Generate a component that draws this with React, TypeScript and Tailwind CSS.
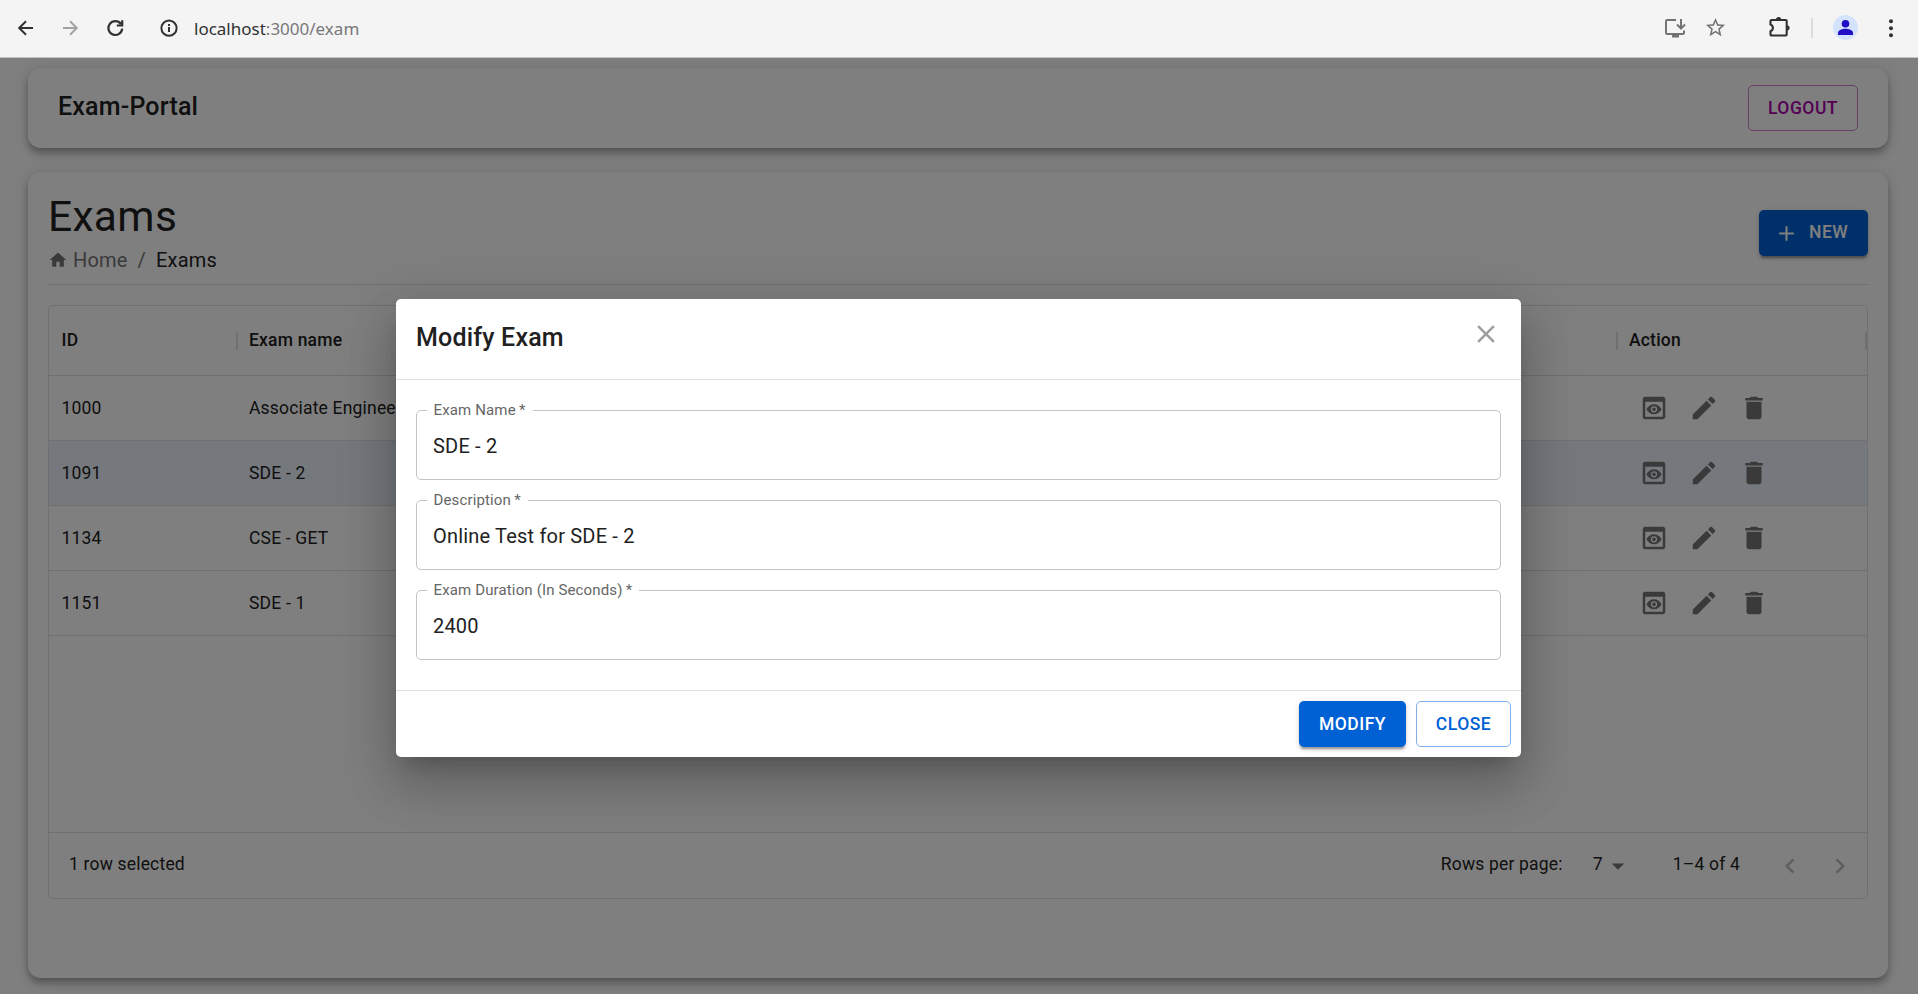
import React from "react";
import { MdAdd, MdArrowDropDown, MdClose, MdDelete, MdEdit, MdHome, MdKeyboardArrowLeft, MdKeyboardArrowRight, MdPreview } from "react-icons/md";

const rows = [
  { id: "1000", name: "Associate Engineer", selected: false },
  { id: "1091", name: "SDE - 2", selected: true },
  { id: "1134", name: "CSE - GET", selected: false },
  { id: "1151", name: "SDE - 1", selected: false },
];

const cardShadow =
  "shadow-[0px_3.75px_6.25px_-1.25px_rgba(0,0,0,0.2),0px_6.25px_10px_0px_rgba(0,0,0,0.14),0px_1.25px_17.5px_0px_rgba(0,0,0,0.12)]";
const buttonShadow =
  "shadow-[0px_3.75px_1.25px_-2.5px_rgba(0,0,0,0.2),0px_2.5px_2.5px_0px_rgba(0,0,0,0.14),0px_1.25px_6.25px_0px_rgba(0,0,0,0.12)]";
const buttonText = "text-[17.5px] leading-[30.6px] font-medium tracking-[0.5px]";

function BrowserBar() {
  return (
    <div className="flex h-[58px] shrink-0 items-center border-b border-[#c4c4c4] bg-[#f4f4f4] text-[#303133]">
      <svg className="ml-[16px] mb-[2px] size-5" viewBox="0 0 20 20" fill="none" stroke="currentColor" strokeWidth="2">
        <path d="M17 10H3.5M10 3.2 3.2 10l6.8 6.8" />
      </svg>
      <svg className="ml-[24px] mb-[2px] size-5 text-[#a3a3a3]" viewBox="0 0 20 20" fill="none" stroke="currentColor" strokeWidth="2">
        <path d="M3 10h13.5M10 3.2l6.8 6.8-6.8 6.8" />
      </svg>
      <svg className="ml-[25px] mb-[2px] size-5" viewBox="0 0 20 20" fill="none" stroke="currentColor" strokeWidth="2.2">
        <path d="M17.2 10.6A6.9 6.9 0 1 1 15.9 6M17.2 2.2v5.3h-5.4" />
      </svg>
      <svg className="ml-[34px] mb-[2px] size-5" viewBox="0 0 20 20" fill="none" stroke="currentColor" strokeWidth="2">
        <circle cx="10" cy="10.2" r="7.6" />
        <path d="M10 9v5M10 6v2" />
      </svg>
      <div className="ml-[15px] font-['Noto_Sans',sans-serif] text-[17px] leading-6 text-[#303133]">
        localhost<span className="text-[#77787a]">:3000/exam</span>
      </div>
      <div className="ml-auto mb-[2px] flex items-center">
        <svg className="h-5 w-[22px] text-[#737373]" viewBox="0 0 22 20" fill="none" stroke="currentColor" strokeWidth="2">
          <path d="M12 2H3.2Q2 2 2 3.2v11.6Q2 16 3.2 16h15.6q1.2 0 1.2-1.2V12.5" />
          <path d="M17 1v9M13 6.5l4 4 4-4" />
          <path d="M8 18h7" strokeWidth="3" />
        </svg>
        <svg className="ml-[18px] size-[23px] text-[#737373]" viewBox="0 0 24 24" fill="currentColor">
          <path d="m22 9.240-7.190-.620L12 2 9.190 8.630 2 9.240l5.460 4.730L5.820 21 12 17.270 18.180 21l-1.630-7.030L22 9.240zM12 15.400l-3.760 2.270 1-4.280-3.320-2.880 4.380-.380L12 6.100l1.710 4.040 4.380.380-3.320 2.880 1 4.280L12 15.400z" />
        </svg>
        <svg className="ml-[40px] mb-[2px] size-6" viewBox="0 0 24 24" fill="none" stroke="currentColor" strokeWidth="2.1">
          <path d="M4.500 5h14.200q1 0 1 1v13.500q0 1-1 1H4.500q-1 0-1-1V16.200a3.600 3.600 0 0 0 0-6.800V6q0-1 1-1z" />
          <path d="M9 4.500a2.600 2.600 0 0 1 5.200 0zM20 10.200a2.600 2.600 0 0 1 0 5.200z" fill="currentColor" stroke="none" />
        </svg>
        <div className="ml-[20px] h-5 w-[2px] bg-[#dcdcdc]" />
        <svg className="ml-[20px] size-[25px]" viewBox="0 0 25 25">
          <circle cx="12.5" cy="12.5" r="12.5" fill="#d3e3fd" />
          <circle cx="12.5" cy="8.8" r="3.8" fill="#200fc4" />
          <path d="M5 20.100v-2.300c0-2.700 5-4 7.500-4s7.500 1.300 7.500 4v2.300z" fill="#200fc4" />
        </svg>
        <svg className="ml-[23px] mr-[17px] size-5" viewBox="0 0 20 20" fill="currentColor">
          <circle cx="10" cy="3.2" r="2" />
          <circle cx="10" cy="10.2" r="2" />
          <circle cx="10" cy="17.2" r="2" />
        </svg>
      </div>
    </div>
  );
}

function Separator() {
  return <div className="h-[18px] w-[2.5px] bg-[#e0e0e0]" />;
}

function ExamGrid() {
  return (
    <div className="mt-5 flex h-[594px] flex-col rounded-[5px] border border-[#e0e0e0] text-[17.5px] tracking-[0.187px]">
      <div className="flex h-[70px] shrink-0 items-center border-b border-[#e0e0e0] font-medium">
        <div className="flex w-[189px] items-center justify-between pl-[12.5px]">ID<Separator /></div>
        <div className="flex w-[1380px] items-center justify-between pl-[11px]">Exam name<Separator /></div>
        <div className="flex flex-1 items-center justify-between pl-[11px]">Action<Separator /></div>
      </div>
      {rows.map((row) => (
        <div key={row.id} className={`flex h-[65px] shrink-0 items-center border-b border-[#e0e0e0] ${row.selected ? "bg-[#ebf2fb]" : ""}`}>
          <div className="w-[187px] pl-[12.5px]">{row.id}</div>
          <div className="w-[1380px] pl-[13px]">{row.name}</div>
          <div className="flex items-center gap-5 pl-[23px] text-[30px] text-[#757575]">
            <MdPreview />
            <MdEdit />
            <MdDelete />
          </div>
        </div>
      ))}
      <div className="flex-1" />
      <div className="flex h-[66px] items-center border-t border-[#e0e0e0] pl-5 pb-[2px]">
        <div>1 row selected</div>
        <div className="ml-auto">Rows per page:</div>
        <div className="ml-[30px]">7</div>
        <MdArrowDropDown className="mt-[3px] size-[30px] text-[#757575]" />
        <div className="ml-[40px]">1–4 of 4</div>
        <MdKeyboardArrowLeft className="ml-[35px] mt-[2px] size-[30px] text-[#bdbdbd]" />
        <MdKeyboardArrowRight className="ml-5 mr-[12px] mt-[2px] size-[30px] text-[#bdbdbd]" />
      </div>
    </div>
  );
}

function Field({ label, value }: { label: string; value: string }) {
  return (
    <fieldset className="-mt-[10px] h-[80px] min-w-0 rounded-[5px] border border-[#c4c4c4] px-[10px]">
      <legend className="h-[20px] pl-[6.5px] pr-[7px] text-[15px] leading-[20px] tracking-[0.14px] text-[#666666]">
        {label}<span>{"\u2009*"}</span>
      </legend>
      <div className="pl-[6px] pt-[12px] text-[20px] leading-[28.75px] tracking-[0.188px] text-[#212121]">{value}</div>
    </fieldset>
  );
}

function ModifyDialog() {
  return (
    <div className="flex h-[458px] w-[1125px] flex-col rounded-[5px] bg-white shadow-[0px_13.75px_18.75px_-8.75px_rgba(0,0,0,0.2),0px_30px_47.5px_3.75px_rgba(0,0,0,0.14),0px_11.25px_57.5px_10px_rgba(0,0,0,0.12)]">
      <div className="flex h-[81px] shrink-0 justify-between border-b border-[#e0e0e0] pl-5 pr-5">
        <h2 className="pt-[19px] text-[25px] leading-10 font-medium tracking-[0.188px] text-[#212121]">Modify Exam</h2>
        <MdClose className="mt-5 size-[30px] text-[#9e9e9e]" />
      </div>
      <div className="flex flex-1 flex-col gap-5 border-b border-[#e0e0e0] px-5 pt-[30px]">
        <Field label="Exam Name" value="SDE - 2" />
        <Field label="Description" value="Online Test for SDE - 2" />
        <Field label="Exam Duration (In Seconds)" value="2400" />
      </div>
      <div className="flex h-[66px] shrink-0 items-center justify-end gap-[10px] pr-[10px]">
        <button className={`h-[46px] w-[107px] rounded-[5px] bg-[#0061d5] text-white ${buttonText} ${buttonShadow}`}>MODIFY</button>
        <button className={`h-[46px] w-[95px] rounded-[5px] border border-[#80b0ea] text-[#0061d5] ${buttonText}`}>CLOSE</button>
      </div>
    </div>
  );
}

export default function App() {
  return (
    <div className="flex h-[994px] w-[1918px] flex-col overflow-hidden font-[Roboto,sans-serif] text-[#212121]">
      <BrowserBar />
      <div className="relative flex-1 overflow-hidden bg-white">
        <div className="pt-[10px] pr-[30px] pl-[28px]">
          <header className={`flex h-20 items-center justify-between rounded-[12.5px] bg-white px-[30px] ${cardShadow}`}>
            <h1 className="pb-[2px] text-[25px] font-medium tracking-[0.188px]">Exam-Portal</h1>
            <button className={`h-[46px] w-[110px] rounded-[5px] border border-[#d580d5] text-[#aa00aa] ${buttonText}`}>LOGOUT</button>
          </header>
          <main className={`mt-6 h-[806px] rounded-[12.5px] bg-white px-5 pt-5 ${cardShadow}`}>
            <div className="flex h-[93px] justify-between border-b border-[#e0e0e0]">
              <div>
                <h2 className="-mt-[1px] text-[42.5px] leading-[52.5px] tracking-[0.312px]">Exams</h2>
                <div className="mt-px flex items-center text-[20px] leading-[30px] tracking-[0.188px] text-[#757575]">
                  <MdHome className="size-5" />
                  <span className="ml-[5px]">Home</span>
                  <span className="mx-[10px]">/</span>
                  <span className="text-[#212121]">Exams</span>
                </div>
              </div>
              <button className={`mt-[18px] flex h-[46px] w-[109px] items-center rounded-[5px] bg-[#0061d5] pl-[15px] text-white ${buttonText} ${buttonShadow}`}>
                <MdAdd className="size-[25px]" />
                <span className="ml-[10px] pb-[2px]">NEW</span>
              </button>
            </div>
            <ExamGrid />
          </main>
        </div>
        <div className="absolute inset-0 bg-black/50 pt-[241px] pl-[396px]">
          <ModifyDialog />
        </div>
      </div>
    </div>
  );
}
